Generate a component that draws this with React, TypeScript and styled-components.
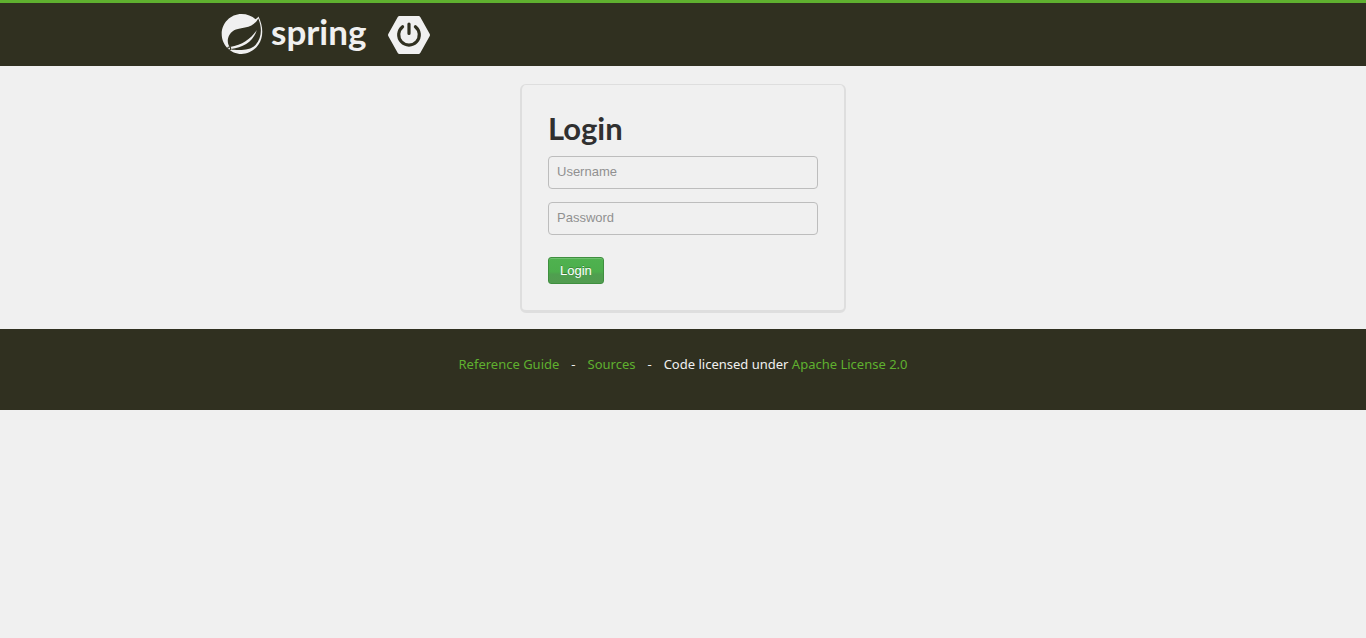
import React from 'react';
import styled, { createGlobalStyle } from 'styled-components';

const GlobalStyle = createGlobalStyle`
  *, *::before, *::after { box-sizing: border-box; }
  body {
    margin: 0;
    background: #f0f0f0;
    color: #303030;
    font: 13px/20px 'Liberation Sans', Arial, sans-serif;
  }
`;

const Header = styled.header`
  border-top: 3px solid #5fb02f;
  background: #303020;
`;

const HeaderInner = styled.div`
  display: flex;
  align-items: center;
  gap: 21px;
  max-width: 940px;
  height: 63px;
  margin: 0 auto;
  padding: 0 8px;
`;

const Brand = styled.a`
  display: flex;
  align-items: flex-start;
  gap: 8px;
  height: 43px;
  color: #f0f0f0;
  text-decoration: none;
`;

const Wordmark = styled.span`
  font: 700 35px/36px Lato, sans-serif;
`;

const BootLink = styled.a`
  display: flex;
`;

const Main = styled.main`
  display: flex;
  justify-content: center;
  padding: 18px 16px 16px;
`;

const LoginCard = styled.form`
  width: 326px;
  padding: 26px;
  border: solid #dedede;
  border-width: 1px 2px 3px;
  border-radius: 6px;
`;

const Title = styled.h1`
  margin: 0 0 10px;
  font: 700 31px/35px Lato, sans-serif;
`;

const Field = styled.input`
  display: block;
  width: 100%;
  height: 33px;
  margin: 0 0 13px;
  padding: 4px 8px 6px;
  border: 1px solid #bdbdbd;
  border-radius: 4px;
  background: transparent;
  color: #303030;
  font: inherit;

  &::placeholder {
    color: #909090;
    opacity: 1;
  }
`;

const SubmitButton = styled.button`
  display: block;
  height: 27px;
  margin: 22px 0 0;
  padding: 0 11px;
  border: 1px solid #3f8f3f;
  border-radius: 3px;
  background: linear-gradient(#4fb24f 0%, #4cae4c 55%, #4f9f4f 65%, #529c50 100%);
  box-shadow: inset 0 1px 0 #70c070;
  color: #ffffff;
  font: 13px/20px 'Liberation Sans', Arial, sans-serif;
  text-shadow: 0 -1px 0 rgba(0, 0, 0, 0.25);
  cursor: pointer;
`;

const Footer = styled.footer`
  display: flex;
  justify-content: center;
  gap: 12px;
  padding: 25px 16px 36px;
  background: #303020;
  color: #f0f0f0;
  font: 13px/20px 'Noto Sans', sans-serif;
`;

const FooterLink = styled.a`
  color: #5fb02f;
  text-decoration: none;
`;

const SpringLeaf = () => (
  <svg width="42" height="42" viewBox="0 0 42 42" aria-hidden="true">
    <path d="M37.500 3.500C42.500 14 42.500 24 37.500 31.500C33.500 37.500 27 41 20.500 41C9.500 41 0.700 32 0.700 21C0.700 10 9.500 1 20.500 1C26 1 31 3 34.500 6.300C35.800 5.500 36.700 4.500 37.500 3.500Z" fill="#f0f0f0" />
    <path d="M37.300 5.500C34.500 10.500 30.500 13.500 24 14.600C17 15.800 12 16.500 8.700 21.500C5.800 26 6.300 31 9.200 35.200C9.500 36.200 11 36.700 13 36.800C20 37.200 29 37.500 34.500 32C40.800 25.500 41.300 15 37.300 5.500Z" fill="#303020" />
    <path d="M10 36C22 35 32.500 28.500 35.800 17C30 25.500 22 31.500 9 34Z" fill="#f0f0f0" />
    <circle cx="8.200" cy="35.500" r="1.500" fill="#f0f0f0" stroke="#303020" strokeWidth="1.200" />
  </svg>
);

const BootLogo = () => (
  <svg width="44" height="40" viewBox="0 0 44 40" aria-hidden="true">
    <path d="M12.500 3H31.500L41 20L31.500 37H12.500L3 20Z" fill="#f0f0f0" stroke="#f0f0f0" strokeWidth="4" strokeLinejoin="round" />
    <path d="M15.600 11.700A10.300 10.300 0 1 0 28.400 11.700M22 9V18.500" fill="none" stroke="#303020" strokeWidth="3.200" strokeLinecap="round" />
  </svg>
);

export default function App() {
  return (
    <>
      <GlobalStyle />
      <Header>
        <HeaderInner>
          <Brand href="#">
            <SpringLeaf />
            <Wordmark>spring</Wordmark>
          </Brand>
          <BootLink href="#" aria-label="Spring Boot">
            <BootLogo />
          </BootLink>
        </HeaderInner>
      </Header>
      <Main>
        <LoginCard onSubmit={(event) => event.preventDefault()}>
          <Title>Login</Title>
          <Field type="text" name="username" placeholder="Username" aria-label="Username" />
          <Field type="password" name="password" placeholder="Password" aria-label="Password" />
          <SubmitButton type="submit">Login</SubmitButton>
        </LoginCard>
      </Main>
      <Footer>
        <FooterLink href="#">Reference Guide</FooterLink>
        <span>-</span>
        <FooterLink href="#">Sources</FooterLink>
        <span>-</span>
        <span>
          Code licensed under <FooterLink href="#">Apache License 2.0</FooterLink>
        </span>
      </Footer>
    </>
  );
}
